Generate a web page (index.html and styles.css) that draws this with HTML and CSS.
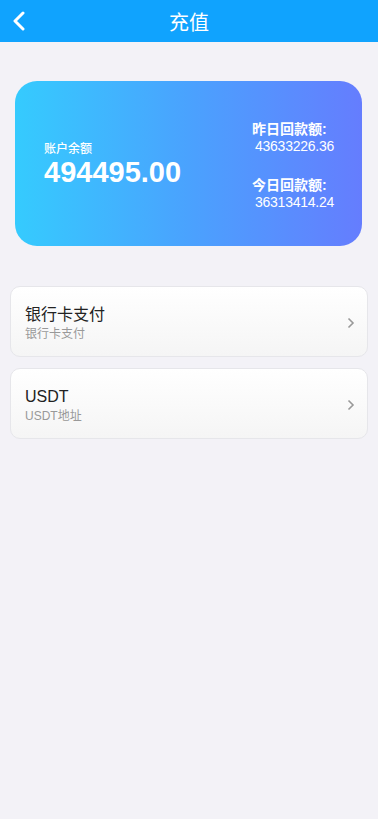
FILE: index.html
```html
<!DOCTYPE html>
<html>
<head>
    <meta charset="utf-8">
    <title>充值</title>
    <link rel="stylesheet" href="styles.css">
</head>
<body>
    <div class="header">
        <span class="back">
            <svg width="14" height="20" viewBox="0 0 14 20"><path d="M11 2 L3 10 L11 18" fill="none" stroke="#fff" stroke-width="3" stroke-linecap="round" stroke-linejoin="round"/></svg>
        </span>
        <h1>充值</h1>
    </div>

    <div class="balance-card">
        <div class="balance">
            <div class="balance-label">账户余额</div>
            <div class="balance-num">494495.00</div>
        </div>
        <div class="returns">
            <div class="return-item">
                <div class="return-label">昨日回款额:</div>
                <div class="return-num">43633226.36</div>
            </div>
            <div class="return-item">
                <div class="return-label">今日回款额:</div>
                <div class="return-num">36313414.24</div>
            </div>
        </div>
    </div>

    <div class="pay-list">
        <div class="pay-item">
            <div>
                <div class="pay-title">银行卡支付</div>
                <div class="pay-sub">银行卡支付</div>
            </div>
            <svg class="arrow" width="8" height="12" viewBox="0 0 8 12"><path d="M1.5 1.5 L6 6 L1.5 10.5" fill="none" stroke="#999" stroke-width="1.6"/></svg>
        </div>
        <div class="pay-item">
            <div>
                <div class="pay-title">USDT</div>
                <div class="pay-sub">USDT地址</div>
            </div>
            <svg class="arrow" width="8" height="12" viewBox="0 0 8 12"><path d="M1.5 1.5 L6 6 L1.5 10.5" fill="none" stroke="#999" stroke-width="1.6"/></svg>
        </div>
    </div>
</body>
</html>
```

FILE: styles.css
```css
body {
    margin: 0;
    font-family: "Liberation Sans", Arial, "Noto Sans CJK SC", sans-serif;
    background: #f3f2f7;
    min-height: 819px;
}
.header {
    height: 42px;
    background: #10a3fe;
    display: flex;
    align-items: center;
    justify-content: center;
    position: relative;
}
.header h1 {
    margin: 0;
    color: #fff;
    font-size: 20px;
    font-weight: normal;
}
.back {
    position: absolute;
    left: 12px;
    top: 11px;
}
.balance-card {
    margin: 39px 16px 0 15px;
    height: 165px;
    border-radius: 22px;
    background: linear-gradient(90deg, #35cbfe 0%, #4aa2fe 50%, #657dfe 100%);
    display: flex;
    align-items: center;
    justify-content: space-between;
    padding: 0 28px 0 29px;
    box-sizing: border-box;
    color: #fff;
}
.balance {
    margin-top: 2px;
}
.balance-label {
    font-size: 12px;
    line-height: 14px;
    font-weight: 500;
}
.balance-num {
    font-size: 29px;
    font-weight: bold;
    line-height: 32px;
}
.returns {
    display: flex;
    flex-direction: column;
    gap: 22px;
    margin-top: 4px;
}
.return-label {
    font-size: 14px;
    font-weight: bold;
    line-height: 17px;
}
.return-num {
    font-size: 14px;
    line-height: 17px;
    padding-left: 3px;
    letter-spacing: -0.25px;
}
.pay-list {
    margin: 40px 10px 0;
    display: flex;
    flex-direction: column;
    gap: 11px;
}
.pay-item {
    height: 71px;
    box-sizing: border-box;
    border: 1px solid #e6e6ea;
    border-radius: 10px;
    background: linear-gradient(180deg, #ffffff 0%, #f5f5f5 100%);
    display: flex;
    align-items: center;
    justify-content: space-between;
    padding: 0 12px 0 14px;
}
.pay-item > div {
    margin-top: 3px;
}
.pay-title {
    font-size: 16px;
    color: #222;
    line-height: 20px;
}
.pay-sub {
    font-size: 12px;
    color: #999;
    line-height: 15px;
    margin-top: 2px;
}
.arrow {
    margin-top: 2px;
}
```
